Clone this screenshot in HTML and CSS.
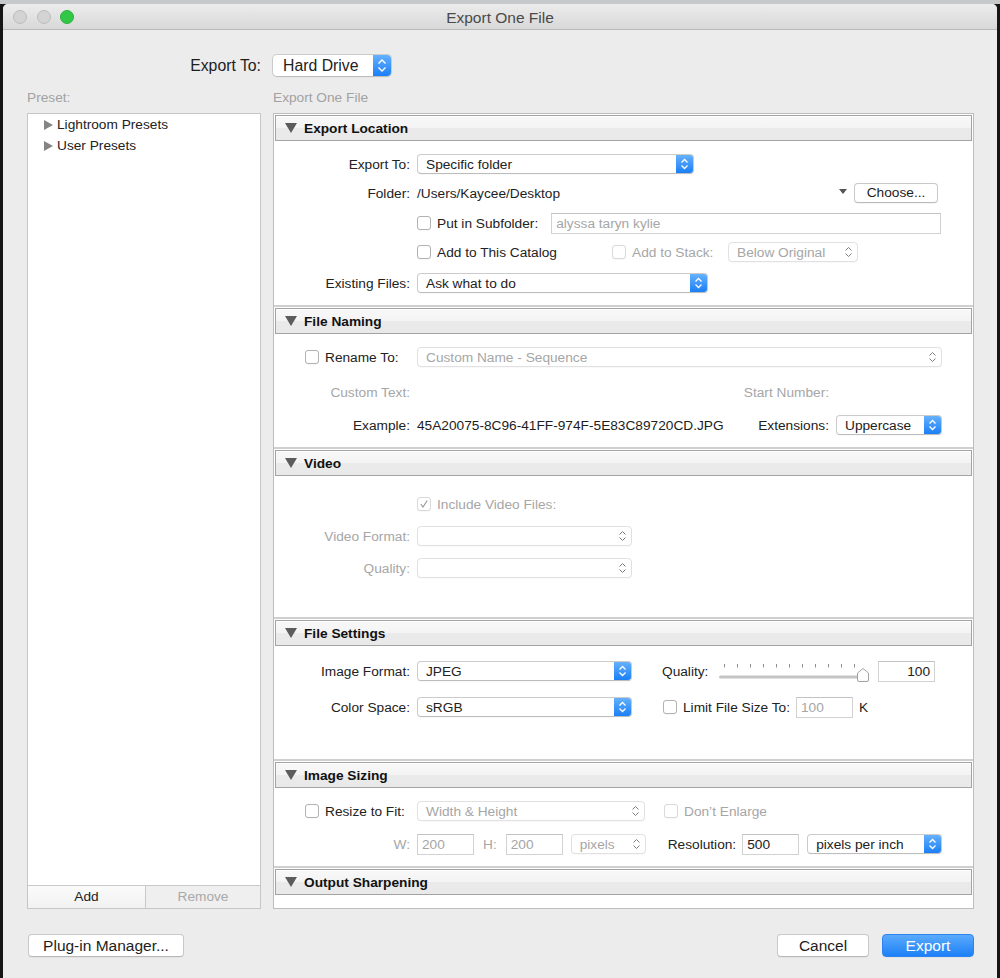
FILE: index.html
```html
<!DOCTYPE html>
<html>
<head>
<meta charset="utf-8">
<title>Export One File</title>
<link rel="stylesheet" href="styles.css">
</head>
<body>
<div class="window">
  <div class="titlebar">
    <div class="lights">
      <span class="light"></span><span class="light"></span><span class="light green"></span>
    </div>
    <div class="title">Export One File</div>
  </div>

  <div class="content">
    <div class="top-row">
      <div class="top-label">Export To:</div>
      <div class="popup big">
        <span class="popup-text">Hard Drive</span>
        <span class="stepper"><svg width="18" height="23" viewBox="0 0 18 23"><path d="M5.5 9.5 L9 6 L12.5 9.5 M5.5 13.5 L9 17 L12.5 13.5" fill="none" stroke="#fff" stroke-width="1.4"/></svg></span>
      </div>
    </div>

    <div class="caption-row">
      <div class="caption">Preset:</div>
      <div class="caption">Export One File</div>
    </div>

    <div class="panels">
      <div class="preset-panel">
        <div class="preset-list">
          <div class="preset-item"><span class="tri-right"></span>Lightroom Presets</div>
          <div class="preset-item"><span class="tri-right"></span>User Presets</div>
        </div>
        <div class="preset-buttons">
          <div class="pbtn">Add</div>
          <div class="pbtn off">Remove</div>
        </div>
      </div>

      <div class="settings-panel">
        <!-- Export Location -->
        <div class="sec">
          <div class="sec-head"><span class="tri-down"></span>Export Location</div>
          <div class="sec-body b-loc">
            <div class="row">
              <div class="lbl">Export To:</div>
              <div class="popup w277"><span class="popup-text">Specific folder</span><span class="stepper"><svg width="17" height="18" viewBox="0 0 17 18"><path d="M5.5 7.5 L8.5 4.5 L11.5 7.5 M5.5 10.5 L8.5 13.5 L11.5 10.5" fill="none" stroke="#fff" stroke-width="1.3"/></svg></span></div>
            </div>
            <div class="row mt9">
              <div class="lbl">Folder:</div>
              <div class="value">/Users/Kaycee/Desktop</div>
              <span class="mini-tri"></span>
              <div class="btn small">Choose...</div>
            </div>
            <div class="row mt10">
              <div class="indent"></div>
              <span class="cb"></span><span class="cb-text">Put in Subfolder:</span>
              <div class="field grow ph">alyssa taryn kylie</div>
            </div>
            <div class="row mt9">
              <div class="indent"></div>
              <div class="cat-group"><span class="cb"></span><span class="cb-text">Add to This Catalog</span></div>
              <span class="cb off"></span><span class="cb-text dim stack-label">Add to Stack:</span>
              <div class="popup dis w130"><span class="popup-text">Below Original</span><span class="stepper plain"><svg width="17" height="18" viewBox="0 0 17 18"><path d="M5.5 7.5 L8.5 4.5 L11.5 7.5 M5.5 10.5 L8.5 13.5 L11.5 10.5" fill="none" stroke="#7d7d7d" stroke-width="1"/></svg></span></div>
            </div>
            <div class="row mt11">
              <div class="lbl">Existing Files:</div>
              <div class="popup w291"><span class="popup-text">Ask what to do</span><span class="stepper"><svg width="17" height="18" viewBox="0 0 17 18"><path d="M5.5 7.5 L8.5 4.5 L11.5 7.5 M5.5 10.5 L8.5 13.5 L11.5 10.5" fill="none" stroke="#fff" stroke-width="1.3"/></svg></span></div>
            </div>
          </div>
        </div>

        <!-- File Naming -->
        <div class="sec">
          <div class="sec-head"><span class="tri-down"></span>File Naming</div>
          <div class="sec-body b-name">
            <div class="row">
              <div class="lbl-check"><span class="cb"></span><span class="cb-text">Rename To:</span></div>
              <div class="popup dis grow"><span class="popup-text">Custom Name - Sequence</span><span class="stepper plain"><svg width="17" height="18" viewBox="0 0 17 18"><path d="M5.5 7.5 L8.5 4.5 L11.5 7.5 M5.5 10.5 L8.5 13.5 L11.5 10.5" fill="none" stroke="#7d7d7d" stroke-width="1"/></svg></span></div>
            </div>
            <div class="row mt15">
              <div class="lbl dim">Custom Text:</div>
              <div class="value grow"></div>
              <div class="rlbl dim">Start Number:</div>
              <div class="w106"></div>
            </div>
            <div class="row mt13">
              <div class="lbl">Example:</div>
              <div class="value grow">45A20075-8C96-41FF-974F-5E83C89720CD.JPG</div>
              <div class="rlbl">Extensions:</div>
              <div class="popup w106"><span class="popup-text">Uppercase</span><span class="stepper"><svg width="17" height="18" viewBox="0 0 17 18"><path d="M5.5 7.5 L8.5 4.5 L11.5 7.5 M5.5 10.5 L8.5 13.5 L11.5 10.5" fill="none" stroke="#fff" stroke-width="1.3"/></svg></span></div>
            </div>
          </div>
        </div>

        <!-- Video -->
        <div class="sec">
          <div class="sec-head"><span class="tri-down"></span>Video</div>
          <div class="sec-body b-video">
            <div class="row">
              <div class="indent"></div>
              <span class="cb off checked"><svg width="12" height="12" viewBox="0 0 12 12"><path d="M2.8 6.2 L5 9 L9.2 2.5" fill="none" stroke="#9c9c9c" stroke-width="1.2"/></svg></span><span class="cb-text dim">Include Video Files:</span>
            </div>
            <div class="row mt12">
              <div class="lbl dim">Video Format:</div>
              <div class="popup dis w215"><span class="popup-text"></span><span class="stepper plain"><svg width="17" height="18" viewBox="0 0 17 18"><path d="M5.5 7.5 L8.5 4.5 L11.5 7.5 M5.5 10.5 L8.5 13.5 L11.5 10.5" fill="none" stroke="#7d7d7d" stroke-width="1"/></svg></span></div>
            </div>
            <div class="row mt12">
              <div class="lbl dim">Quality:</div>
              <div class="popup dis w215"><span class="popup-text"></span><span class="stepper plain"><svg width="17" height="18" viewBox="0 0 17 18"><path d="M5.5 7.5 L8.5 4.5 L11.5 7.5 M5.5 10.5 L8.5 13.5 L11.5 10.5" fill="none" stroke="#7d7d7d" stroke-width="1"/></svg></span></div>
            </div>
          </div>
        </div>

        <!-- File Settings -->
        <div class="sec">
          <div class="sec-head"><span class="tri-down"></span>File Settings</div>
          <div class="sec-body b-settings">
            <div class="row">
              <div class="lbl">Image Format:</div>
              <div class="popup w215"><span class="popup-text">JPEG</span><span class="stepper"><svg width="17" height="18" viewBox="0 0 17 18"><path d="M5.5 7.5 L8.5 4.5 L11.5 7.5 M5.5 10.5 L8.5 13.5 L11.5 10.5" fill="none" stroke="#fff" stroke-width="1.3"/></svg></span></div>
              <div class="quality-label">Quality:</div>
              <svg class="slider" width="151" height="22" viewBox="0 0 151 22">
                <g stroke="#8e8e8e" stroke-width="1">
                  <line x1="6.5" y1="4" x2="6.5" y2="7.5"/>
                  <line x1="19.5" y1="4" x2="19.5" y2="7.5"/>
                  <line x1="32.5" y1="4" x2="32.5" y2="7.5"/>
                  <line x1="45.5" y1="4" x2="45.5" y2="7.5"/>
                  <line x1="58.5" y1="4" x2="58.5" y2="7.5"/>
                  <line x1="71.5" y1="4" x2="71.5" y2="7.5"/>
                  <line x1="84.5" y1="4" x2="84.5" y2="7.5"/>
                  <line x1="97.5" y1="4" x2="97.5" y2="7.5"/>
                  <line x1="110.5" y1="4" x2="110.5" y2="7.5"/>
                  <line x1="123.5" y1="4" x2="123.5" y2="7.5"/>
                  <line x1="136.5" y1="4" x2="136.5" y2="7.5"/>
                </g>
                <rect x="1" y="15.5" width="142" height="3" rx="1.5" fill="#c4c4c4"/>
                <path d="M139.5 20 L139.5 13 L145 8.5 L150.5 13 L150.5 20 Q150.5 21.5 149 21.5 L141 21.5 Q139.5 21.5 139.5 20 Z" fill="#fdfdfd" stroke="#a2a2a2" stroke-width="1"/>
              </svg>
              <div class="field num w57">100</div>
            </div>
            <div class="row mt16">
              <div class="lbl">Color Space:</div>
              <div class="popup w215"><span class="popup-text">sRGB</span><span class="stepper"><svg width="17" height="18" viewBox="0 0 17 18"><path d="M5.5 7.5 L8.5 4.5 L11.5 7.5 M5.5 10.5 L8.5 13.5 L11.5 10.5" fill="none" stroke="#fff" stroke-width="1.3"/></svg></span></div>
              <span class="cb limit-cb"></span><span class="cb-text">Limit File Size To:</span>
              <div class="field w57 ph limit-field">100</div>
              <span class="k-unit">K</span>
            </div>
          </div>
        </div>

        <!-- Image Sizing -->
        <div class="sec">
          <div class="sec-head"><span class="tri-down"></span>Image Sizing</div>
          <div class="sec-body b-sizing">
            <div class="row">
              <div class="lbl-check"><span class="cb"></span><span class="cb-text">Resize to Fit:</span></div>
              <div class="popup dis w228"><span class="popup-text">Width &amp; Height</span><span class="stepper plain"><svg width="17" height="18" viewBox="0 0 17 18"><path d="M5.5 7.5 L8.5 4.5 L11.5 7.5 M5.5 10.5 L8.5 13.5 L11.5 10.5" fill="none" stroke="#7d7d7d" stroke-width="1"/></svg></span></div>
              <span class="cb off enlarge-cb"></span><span class="cb-text dim">Don’t Enlarge</span>
            </div>
            <div class="row mt13">
              <div class="lbl dim">W:</div>
              <div class="field w57 ph">200</div>
              <span class="dim h-label">H:</span>
              <div class="field w57 ph">200</div>
              <div class="popup dis w75 px-pop"><span class="popup-text">pixels</span><span class="stepper plain"><svg width="17" height="18" viewBox="0 0 17 18"><path d="M5.5 7.5 L8.5 4.5 L11.5 7.5 M5.5 10.5 L8.5 13.5 L11.5 10.5" fill="none" stroke="#7d7d7d" stroke-width="1"/></svg></span></div>
              <span class="res-label">Resolution:</span>
              <div class="field w57 res-field">500</div>
              <div class="popup grow ppi-pop"><span class="popup-text">pixels per inch</span><span class="stepper"><svg width="17" height="18" viewBox="0 0 17 18"><path d="M5.5 7.5 L8.5 4.5 L11.5 7.5 M5.5 10.5 L8.5 13.5 L11.5 10.5" fill="none" stroke="#fff" stroke-width="1.3"/></svg></span></div>
            </div>
          </div>
        </div>

        <!-- Output Sharpening -->
        <div class="sec last">
          <div class="sec-head"><span class="tri-down"></span>Output Sharpening</div>
          <div class="sec-body b-sharp"></div>
        </div>
      </div>
    </div>

    <div class="bottom-row">
      <div class="btn large plugin">Plug-in Manager...</div>
      <div class="spacer"></div>
      <div class="btn large w92">Cancel</div>
      <div class="btn large w92 primary">Export</div>
    </div>
  </div>
</div>
</body>
</html>
```

FILE: styles.css
```css
html, body {
  margin: 0;
  padding: 0;
  height: 100%;
}

body {
  background: linear-gradient(#c6c8ca 0, #c6c8ca 4px, #151515 4px);
  overflow: hidden;
  font-family: "Liberation Sans", Arial, sans-serif;
  font-size: 13.7px;
  color: #222;
}

.window {
  margin: 4px 0 0 3px;
  width: 994px;
  height: 974px;
  background: #ececec;
  border-radius: 5px 5px 0 0;
  overflow: hidden;
}

/* title bar */
.titlebar {
  height: 25px;
  border-bottom: 1px solid #b9b9b9;
  background: linear-gradient(#ececec, #d8d8d8);
  display: flex;
  align-items: center;
  position: relative;
}

.lights {
  display: flex;
  gap: 9.5px;
  margin-left: 10px;
}

.light {
  width: 12px;
  height: 12px;
  border-radius: 50%;
  background: #d3d3d3;
  border: 1px solid #bdbdbd;
}

.light.green {
  background: #33c748;
  border-color: #2bb03e;
}

.title {
  position: absolute;
  left: 0;
  right: 0;
  top: 0;
  line-height: 28px;
  text-align: center;
  font-size: 15.5px;
  color: #4a4a4a;
}

/* content */
.content {
  padding: 24px 23px 0 24px;
}

.top-row {
  display: flex;
  align-items: center;
  height: 23px;
}

.top-label {
  width: 234px;
  text-align: right;
  margin-right: 11px;
  font-size: 15.8px;
  color: #1d1d1d;
}

.caption-row {
  margin-top: 12px;
  display: grid;
  grid-template-columns: 234px 701px;
  column-gap: 12px;
  line-height: 17px;
}

.caption {
  color: #a2a2a2;
  font-size: 13.7px;
}

.panels {
  margin-top: 7px;
  display: grid;
  grid-template-columns: 234px 701px;
  column-gap: 12px;
  height: 796px;
}

/* preset panel */
.preset-panel {
  background: #fff;
  border: 1px solid #c6c6c6;
  display: flex;
  flex-direction: column;
}

.preset-list {
  flex: 1;
}

.preset-item {
  height: 21px;
  line-height: 21px;
  padding-left: 16px;
  display: flex;
  align-items: center;
  color: #222;
}

.tri-right {
  width: 0;
  height: 0;
  border-top: 5px solid transparent;
  border-bottom: 5px solid transparent;
  border-left: 9px solid #858585;
  margin-right: 4px;
}

.preset-buttons {
  height: 22px;
  border-top: 1px solid #c8c8c8;
  display: grid;
  grid-template-columns: 117px 1fr;
}

.pbtn {
  text-align: center;
  line-height: 22px;
  background: linear-gradient(#fbfbfb, #f1f1f1);
  color: #222;
}

.pbtn.off {
  border-left: 1px solid #c8c8c8;
  background: #efefef;
  color: #a9a9a9;
}

/* settings panel */
.settings-panel {
  background: #fff;
  border: 1px solid #bdbdbd;
}

.sec {
  padding: 1px 1px 0 1px;
  border-bottom: 2px solid #cfcfcf;
}

.sec.last {
  border-bottom: none;
}

.sec-head {
  height: 26px;
  box-sizing: border-box;
  border: 1px solid #a3a3a3;
  box-shadow: inset 0 1px 0 #ffffff;
  background: linear-gradient(#f8f8f8 0, #f4f4f4 48%, #eaeaea 52%, #e9e9e9 100%);
  display: flex;
  align-items: center;
  padding-left: 9px;
  font-weight: bold;
  font-size: 13.7px;
  color: #111;
}

.tri-down {
  width: 0;
  height: 0;
  border-left: 6px solid transparent;
  border-right: 6px solid transparent;
  border-top: 10px solid #5c5c5c;
  margin-right: 7px;
}

.sec-body {
  box-sizing: border-box;
  padding-right: 30px;
}

.b-loc { height: 164px; padding-top: 13px; }
.b-name { height: 113px; padding-top: 13px; }
.b-video { height: 141px; padding-top: 18px; }
.b-settings { height: 113px; padding-top: 15px; }
.b-sizing { height: 78px; padding-top: 13px; }
.b-sharp { height: 13px; }

.mt9 { margin-top: 9px; }
.mt10 { margin-top: 10px; }
.mt11 { margin-top: 11px; }
.mt12 { margin-top: 12px; }
.mt13 { margin-top: 13px; }
.mt15 { margin-top: 15px; }
.mt16 { margin-top: 16px; }

.row {
  display: flex;
  align-items: center;
  height: 20px;
  white-space: nowrap;
}

.lbl {
  width: 135px;
  flex: none;
  text-align: right;
  margin-right: 7px;
}

.lbl-check {
  width: 105px;
  flex: none;
  padding-left: 30px;
  margin-right: 7px;
  display: flex;
  align-items: center;
}

.indent {
  width: 142px;
  flex: none;
}

.value {
  color: #1d1d1d;
}

.grow {
  flex: 1;
}

.dim {
  color: #a6a6a6;
}

.rlbl {
  margin-right: 7px;
  text-align: right;
}

/* popup buttons */
.popup {
  height: 20px;
  box-sizing: border-box;
  border: 1px solid #cbcbcb;
  border-bottom-color: #bdbdbd;
  border-radius: 4px;
  background: #fff;
  display: flex;
  align-items: center;
  overflow: hidden;
  flex: none;
  box-shadow: 0 0.5px 0 rgba(0,0,0,0.05);
}

.popup.grow {
  flex: 1;
}

.popup-text {
  flex: 1;
  padding-left: 8px;
  color: #222;
  overflow: hidden;
}

.stepper {
  width: 17px;
  align-self: stretch;
  background: linear-gradient(#65b1fd, #1b7ff6);
  display: flex;
  align-items: center;
  justify-content: center;
}

.stepper.plain {
  background: transparent;
}

.popup.dis {
  border-color: #e1e1e1;
}

.popup.dis .popup-text {
  color: #a6a6a6;
}

.popup.big {
  width: 120px;
  height: 23px;
  border-radius: 5px;
  font-size: 15.8px;
}

.popup.big .popup-text {
  padding-left: 10px;
}

.popup.big .stepper {
  width: 18px;
}

.w277 { width: 277px; }
.w291 { width: 291px; }
.w130 { width: 130px; }
.w106 { width: 106px; flex: none; }
.w215 { width: 215px; }
.w228 { width: 228px; }
.w75 { width: 75px; }
.w57 { width: 57px; flex: none; }
.w92 { width: 92px; }

/* checkboxes */
.cb {
  width: 14px;
  height: 14px;
  box-sizing: border-box;
  border: 1px solid #b2b2b2;
  border-radius: 3px;
  background: #fff;
  flex: none;
  box-shadow: 0 0.5px 0 rgba(0,0,0,0.06);
  display: flex;
  align-items: center;
  justify-content: center;
}

.cb.off {
  border-color: #d9d9d9;
}

.cb-text {
  margin-left: 6px;
}

.cat-group {
  width: 195px;
  display: flex;
  align-items: center;
  flex: none;
}

.stack-label {
  width: 96px;
}

/* misc row items */
.mini-tri {
  width: 0;
  height: 0;
  border-left: 4px solid transparent;
  border-right: 4px solid transparent;
  border-top: 5px solid #555;
  margin-left: auto;
  margin-right: 7px;
  margin-top: -3px;
}

.field {
  height: 21px;
  box-sizing: border-box;
  border: 1px solid #d2d2d2;
  border-top-color: #c2c2c2;
  background: #fff;
  line-height: 19px;
  padding: 0 4px;
  color: #222;
}

.field.grow {
  margin-left: 13px;
  margin-right: 1px;
}

.field.ph {
  color: #a6a6a6;
}

.field.num {
  text-align: right;
}

.quality-label {
  margin-left: 30px;
  width: 56px;
}

.slider {
  flex: none;
  margin-right: 9px;
}

.limit-cb {
  margin-left: 31px;
}

.limit-field {
  margin-left: 6px;
}

.k-unit {
  margin-left: 6px;
}

.enlarge-cb {
  margin-left: 19px;
}

.h-label {
  margin-left: 9px;
  margin-right: 9px;
}

.px-pop {
  margin-left: 8px;
}

.res-label {
  margin-left: 22px;
  margin-right: 6px;
}

.res-field {
  width: 57px;
}

.ppi-pop {
  margin-left: 8px;
}

/* buttons */
.btn {
  box-sizing: border-box;
  border: 1px solid #c9c9c9;
  border-bottom-color: #b9b9b9;
  border-radius: 4px;
  background: #fff;
  text-align: center;
  color: #1d1d1d;
  box-shadow: 0 0.5px 0.5px rgba(0,0,0,0.08);
}

.btn.small {
  width: 84px;
  height: 20px;
  line-height: 18px;
  margin-right: 4px;
  flex: none;
}

.btn.large {
  height: 23px;
  line-height: 21px;
  font-size: 15.5px;
}

.btn.plugin {
  width: 156px;
  margin-left: 1px;
}

.btn.primary {
  margin-left: 13px;
  border-color: #2a83ee;
  background: linear-gradient(#5aabfc, #1d80f5);
  color: #fff;
}

.bottom-row {
  margin-top: 25px;
  display: flex;
  align-items: center;
}

.spacer {
  flex: 1;
}
```
